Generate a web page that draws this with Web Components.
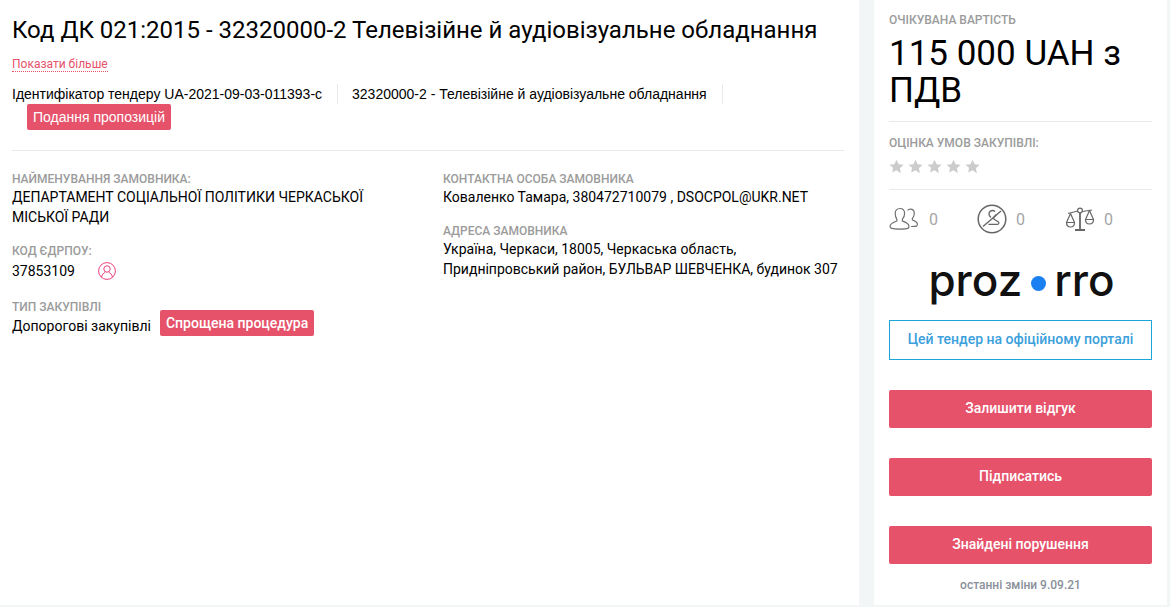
<!DOCTYPE html>
<html lang="uk">
<head>
<meta charset="utf-8">
<title>Тендер</title>
<style>
  html, body { margin: 0; padding: 0; height: 100%; overflow: hidden; }
  body { background: #f3f6f7; font-family: Roboto, "Liberation Sans", sans-serif; color: #000; }
</style>
</head>
<body>
<tender-page>
  <tender-main slot="main"></tender-main>
  <tender-side slot="side"></tender-side>
</tender-page>

<script>
const PINK = "#e6526a";

class TenderPage extends HTMLElement {
  constructor() {
    super();
    this.attachShadow({ mode: "open" });
    this.shadowRoot.innerHTML = `
      <style>
        :host { display: flex; height: 605px; gap: 15px; padding-right: 3px; }
        .main { width: 859px; flex: none; background: #fff; }
        .side { width: 293px; flex: none; background: #fff; }
      </style>
      <div class="main"><slot name="main"></slot></div>
      <div class="side"><slot name="side"></slot></div>`;
  }
}

class TagBadge extends HTMLElement {
  constructor() {
    super();
    this.attachShadow({ mode: "open" });
    this.shadowRoot.innerHTML = `
      <style>
        :host { display: inline-block; background: ${PINK}; color: #fff; border-radius: 2px;
          font-size: 14px; font-weight: 500; line-height: 26px; padding: 0 6px; }
      </style>
      <slot></slot>`;
  }
}

class InfoField extends HTMLElement {
  constructor() {
    super();
    this.attachShadow({ mode: "open" });
    this.shadowRoot.innerHTML = `
      <style>
        :host { display: block; }
        .label { font-size: 12px; font-weight: 500; line-height: 14px; color: #9b9b9b; text-transform: uppercase; }
        .value { font-size: 14px; line-height: 20px; color: #000; margin-top: 1px; }
      </style>
      <div class="label">${this.getAttribute("label")}</div>
      <div class="value"><slot></slot></div>`;
  }
}

class TenderMain extends HTMLElement {
  constructor() {
    super();
    this.attachShadow({ mode: "open" });
    this.shadowRoot.innerHTML = `
      <style>
        :host { display: block; padding: 14px 15px 0 12px; }
        h1 { font-size: 24px; font-weight: 400; line-height: 32px; margin: 0; color: #000; }
        .more { display: inline-block; margin-top: 12px; font-size: 12px; line-height: 13px; color: ${PINK};
          border-bottom: 1px dotted ${PINK}; }
        .ids { display: flex; flex-wrap: wrap; margin-top: 12px; font-family: "Liberation Sans", Arial, sans-serif; font-size: 14px; line-height: 20px; }
        .ids span { height: 20px; padding-right: 15px; border-right: 1px solid #e9e9e9; margin-right: 14px; }
        .ids span + span { margin-right: 0; }
        .status { margin-left: 15px; font-family: "Liberation Sans", Arial, sans-serif; font-weight: 400; }
        .status-row { display: block; }
        hr { border: 0; border-top: 1px solid #e9e9e9; margin: 20px 0 0; }
        .cols { display: grid; grid-template-columns: 431px 1fr; margin-top: 21px; }
        .col { display: flex; flex-direction: column; }
        .left info-field:nth-child(2) { margin-top: 17px; }
        .left info-field:nth-child(3) { margin-top: 17px; }
        .right info-field + info-field { margin-top: 17px; }
        .name { display: block; width: 400px; }
        .code { display: flex; align-items: center; gap: 23px; height: 24px; }
        .code svg { width: 18px; height: 18px; flex: none; }
        .type { display: flex; align-items: flex-start; gap: 9px; margin-top: -5px; }
        .type span { padding-top: 6px; }
      </style>
      <h1>Код ДК 021:2015 - 32320000-2 Телевізійне й аудіовізуальне обладнання</h1>
      <a class="more">Показати більше</a>
      <div class="ids">
        <span>Ідентифікатор тендеру UA-2021-09-03-011393-c</span>
        <span>32320000-2 - Телевізійне й аудіовізуальне обладнання</span>
      </div>
      <div class="status-row"><tag-badge class="status">Подання пропозицій</tag-badge></div>
      <hr>
      <div class="cols">
        <div class="col left">
          <info-field label="Найменування замовника:"><span class="name">ДЕПАРТАМЕНТ СОЦІАЛЬНОЇ ПОЛІТИКИ ЧЕРКАСЬКОЇ МІСЬКОЇ РАДИ</span></info-field>
          <info-field label="Код ЄДРПОУ:">
            <div class="code">37853109
              <svg viewBox="0 0 18 18" fill="none" stroke="#e8407f" stroke-width="1">
                <circle cx="9" cy="9" r="8.4"/>
                <circle cx="9" cy="7" r="3.2"/>
                <path d="M3.6 15c.4-2.800 2.400-4.200 3.600-4.600M14.400 15c-.4-2.800-2.400-4.200-3.600-4.600"/>
              </svg>
            </div>
          </info-field>
          <info-field label="Тип закупівлі">
            <div class="type"><span>Допорогові закупівлі</span> <tag-badge>Спрощена процедура</tag-badge></div>
          </info-field>
        </div>
        <div class="col right">
          <info-field label="Контактна особа замовника">Коваленко Тамара, 380472710079 , DSOCPOL@UKR.NET</info-field>
          <info-field label="Адреса замовника">Україна, Черкаси, 18005, Черкаська область,<br>Придніпровський район, БУЛЬВАР ШЕВЧЕНКА, будинок 307</info-field>
        </div>
      </div>`;
  }
}

class StatIcon extends HTMLElement {
  constructor() {
    super();
    this.attachShadow({ mode: "open" });
    const icons = {
      users: `<svg width="31" height="26" viewBox="0 0 31 26" fill="none" stroke="#707070" stroke-width="1.2">
        <path d="M11 2.500c3 0 4.600 2.300 4.600 5.100 0 2.400-1 4.400-2.200 5.600v1.800c2.400 1 5.800 2.100 6.400 4.300.3 1.300-.2 2.700-1 3.100-2 .9-13 .9-16 0-1.400-.4-2-1.700-1.600-3 .6-2.200 4.400-3.400 6.600-4.400v-1.800C7 12 6.200 10 6.200 7.600 6.200 4.800 8 2.500 11 2.500z"/>
        <path d="M18.500 4.500c.7-.9 1.800-1.300 2.900-1.300 2.600 0 3.900 1.900 3.900 4.300 0 2-.8 3.700-1.900 4.800v1.700c2 .8 4.400 1.500 4.900 3.500.3 1.100 0 2.300-.8 2.600-.7.300-2.500.4-5.400.4"/>
      </svg>`,
      noreview: `<svg width="30" height="30" viewBox="0 0 30 30" fill="none" stroke="#666" stroke-width="1.300">
        <circle cx="15" cy="15" r="13.800" stroke-width="1.500"/>
        <path d="M6 22.500L24 7" stroke-width="1.400"/>
        <path d="M14 13.500c-1.400-1-2.200-2.500-2-4 .3-1.800 1.700-3 3.500-3 1 0 1.900.4 2.500 1.100"/>
        <path d="M18.700 10.500c-.3 1.300-1 2.300-2 3.100v1.400l4.500 2.800c1.100.7.700 2.500-.8 2.500H11.500"/>
      </svg>`,
      scales: `<svg width="30" height="28" viewBox="0 0 30 28" fill="none" stroke="#666" stroke-width="1.200">
        <circle cx="15" cy="5.500" r="2.400"/>
        <path d="M15 8v17M10 25h10" stroke-width="1.800"/>
        <path d="M3 8.500l9.700-2.500M27 5l-9.700 1.500"/>
        <path d="M5.500 8.500L1.500 17.500M5.500 8.500l4 9M1.500 17.500h8c0 2.800-1.800 4.500-4 4.500s-4-1.700-4-4.500z"/>
        <path d="M24.500 5.500l-4 9M24.500 5.500l4 9M20.500 14.500h8c0 2.800-1.800 4.500-4 4.500s-4-1.700-4-4.500z"/>
      </svg>`
    };
    this.shadowRoot.innerHTML = `
      <style>
        :host { display: flex; align-items: center; gap: 9px; height: 30px; font-size: 16px; color: #a6a6a6; }
        svg { display: block; flex: none; }
      </style>
      ${icons[this.getAttribute("icon")]}<slot></slot>`;
  }
}

class ActionButton extends HTMLElement {
  constructor() {
    super();
    this.attachShadow({ mode: "open" });
    this.shadowRoot.innerHTML = `
      <style>
        :host { display: block; height: 38px; line-height: 36px; background: ${PINK}; color: #fff; border-radius: 2px;
          text-align: center; font-size: 14px; font-weight: 500; }
      </style>
      <slot></slot>`;
  }
}

class ProzorroLogo extends HTMLElement {
  constructor() {
    super();
    this.attachShadow({ mode: "open" });
    this.shadowRoot.innerHTML = `
      <style>
        :host { display: flex; justify-content: center; align-items: center; height: 46px; box-sizing: border-box; padding: 8px 0 0 2px;
          font-family: Inter, Lato, sans-serif; font-size: 44px; font-weight: 500; line-height: 46px; color: #111; }
        i { display: block; width: 15px; height: 15px; border-radius: 50%; background: #1a7ff0; margin: 6px 8px 0 9px; }
      </style>
      <span>proz</span><i></i><span>rro</span>`;
  }
}

class TenderSide extends HTMLElement {
  constructor() {
    super();
    this.attachShadow({ mode: "open" });
    const star = `<svg width="15" height="15" viewBox="0 0 24 24" fill="#ccc"><path d="M12 1l3.400 7.300 7.900 1-5.800 5.500 1.500 7.900L12 17.800l-7 3.900 1.500-7.900L.7 9.300l7.900-1z"/></svg>`;
    this.shadowRoot.innerHTML = `
      <style>
        :host { display: block; padding: 13px 15px 0; }
        .label { font-size: 12px; font-weight: 500; line-height: 14px; color: #9b9b9b; text-transform: uppercase; }
        .price { font-size: 35px; line-height: 37px; margin-top: 8px; color: #000; }
        hr { border: 0; border-top: 1px solid #e9e9e9; margin: 0; }
        .rating { margin-top: 12px; }
        .rating-block { padding-top: 14px; }
        .stars { display: flex; gap: 4px; margin-top: 9px; height: 15px; }
        .stars svg { display: block; }
        .stats { display: flex; margin-top: 14px; }
        .stats stat-icon:nth-child(1), .stats stat-icon:nth-child(2) { width: 88px; }
        .portal { display: block; border: 1px solid #1ba5d8; text-align: center;
          color: #3ba0dc; font-size: 14px; font-weight: 500; box-sizing: border-box; height: 40px; line-height: 36px; margin-top: 21px; }
        prozorro-logo { margin-top: 19px; }
        .actions { display: flex; flex-direction: column; gap: 30px; margin-top: 30px; }
        .changed { text-align: center; font-size: 12px; font-weight: 500; line-height: 14px; color: #8a9099; margin-top: 14px; }
      </style>
      <div class="label">Очікувана вартість</div>
      <div class="price">115 000 UAH з ПДВ</div>
      <hr class="rating">
      <div class="rating-block">
        <div class="label">Оцінка умов закупівлі:</div>
        <div class="stars">${star.repeat(5)}</div>
      </div>
      <hr style="margin-top:15px">
      <div class="stats">
        <stat-icon icon="users">0</stat-icon>
        <stat-icon icon="noreview">0</stat-icon>
        <stat-icon icon="scales">0</stat-icon>
      </div>
      <prozorro-logo></prozorro-logo>
      <a class="portal">Цей тендер на офіційному порталі</a>
      <div class="actions">
        <action-button>Залишити відгук</action-button>
        <action-button>Підписатись</action-button>
        <action-button>Знайдені порушення</action-button>
      </div>
      <div class="changed">останні зміни 9.09.21</div>`;
  }
}

customElements.define("tag-badge", TagBadge);
customElements.define("info-field", InfoField);
customElements.define("stat-icon", StatIcon);
customElements.define("action-button", ActionButton);
customElements.define("prozorro-logo", ProzorroLogo);
customElements.define("tender-main", TenderMain);
customElements.define("tender-side", TenderSide);
customElements.define("tender-page", TenderPage);
</script>
</body>
</html>
